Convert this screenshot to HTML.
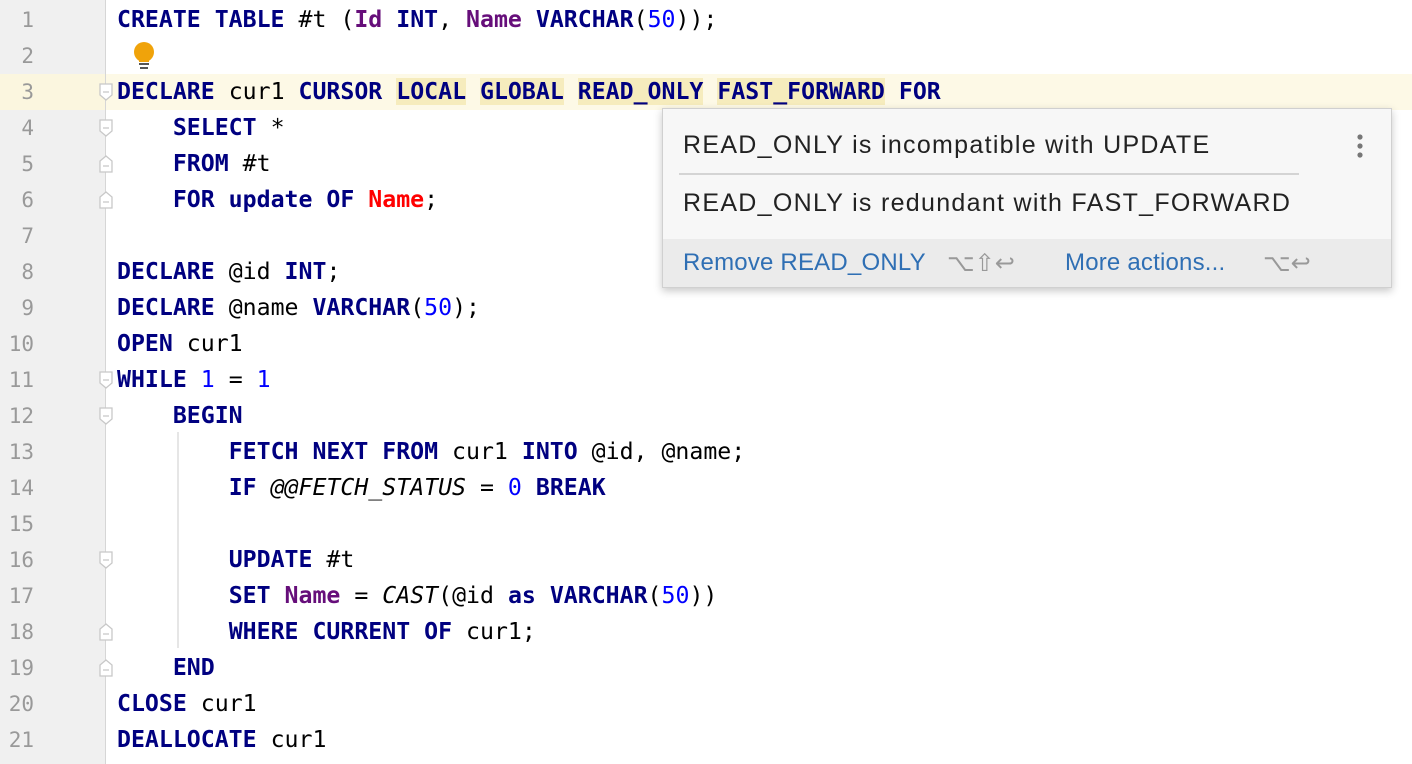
<!DOCTYPE html>
<html><head><meta charset="utf-8"><style>
body{margin:0;width:1412px;height:764px;overflow:hidden;background:#fff;position:relative;font-family:"DejaVu Sans Mono","Liberation Mono",monospace;}
.gut{position:absolute;left:0;top:0;width:106px;height:764px;background:#f0f0f0;}
.gl{position:absolute;left:105px;top:0;width:1px;height:764px;background:#d6d6d6;}
.hl{position:absolute;left:0;top:74px;width:1412px;height:36px;background:#fdf9e6;}
.hlg{position:absolute;left:0;top:74px;width:106px;height:36px;background:#fbf6df;}
.ln{position:absolute;left:0;width:34px;text-align:right;font-size:21px;color:#999;font-family:"DejaVu Sans Mono",monospace;}
.code{position:absolute;left:117px;top:2px;font-size:23.2px;line-height:36px;white-space:pre;color:#000;}
.k{color:#000080;font-weight:bold}
.n{color:#0000ff}
.p{color:#660e7a;font-weight:bold}
.r{color:#ff0000;font-weight:bold}
.i{font-style:italic}
.m{background:#f6ecbd}
.ig{position:absolute;left:177px;top:432px;width:2px;height:216px;background:#e6e6e6;}
.pop{position:absolute;left:662px;top:108px;width:728px;height:178px;background:#f7f7f7;border:1px solid #d0d0d0;box-shadow:0 3px 8px rgba(0,0,0,.22);font-family:"Liberation Sans",sans-serif;font-size:24px;color:#222;}
.pop .t{position:absolute;left:20px;font-size:25px;letter-spacing:1.3px;}
.foot{position:absolute;left:0;top:130px;width:728px;height:48px;background:#ebebeb;}
.a{position:absolute;top:10px;color:#2f6fb4;letter-spacing:0.2px}
.s{position:absolute;top:10px;color:#999;}
.fm{position:absolute;left:98px;}
</style></head><body>
<div class="gut"></div>
<div class="hlg"></div>
<div class="gl"></div>
<div class="hl" style="left:106px;width:1306px"></div>
<div class="ln" style="top:8px">1</div>
<div class="ln" style="top:44px">2</div>
<div class="ln" style="top:80px">3</div>
<div class="ln" style="top:116px">4</div>
<div class="ln" style="top:152px">5</div>
<div class="ln" style="top:188px">6</div>
<div class="ln" style="top:224px">7</div>
<div class="ln" style="top:260px">8</div>
<div class="ln" style="top:296px">9</div>
<div class="ln" style="top:332px">10</div>
<div class="ln" style="top:368px">11</div>
<div class="ln" style="top:404px">12</div>
<div class="ln" style="top:440px">13</div>
<div class="ln" style="top:476px">14</div>
<div class="ln" style="top:512px">15</div>
<div class="ln" style="top:548px">16</div>
<div class="ln" style="top:584px">17</div>
<div class="ln" style="top:620px">18</div>
<div class="ln" style="top:656px">19</div>
<div class="ln" style="top:692px">20</div>
<div class="ln" style="top:728px">21</div>
<svg class="fm" style="top:0" width="16" height="764" viewBox="0 0 16 764">
<g fill="#fff" stroke="#c8c8c8" stroke-width="1.3">
<path d="M2 84h12v11l-6 5l-6-5z"/><path d="M2 120h12v11l-6 5l-6-5z"/>
<path d="M2 372h12v11l-6 5l-6-5z"/><path d="M2 408h12v11l-6 5l-6-5z"/>
<path d="M2 552h12v11l-6 5l-6-5z"/>
<path d="M2 172h12v-11l-6-5l-6 5z"/><path d="M2 208h12v-11l-6-5l-6 5z"/>
<path d="M2 640h12v-11l-6-5l-6 5z"/><path d="M2 676h12v-11l-6-5l-6 5z"/>
</g>
<g stroke="#c8c8c8" stroke-width="1.3">
<path d="M5 92h6M5 128h6M5 380h6M5 416h6M5 560h6M5 166h6M5 202h6M5 634h6M5 670h6"/>
</g>
</svg>
<svg style="position:absolute;left:133px;top:42px" width="22" height="30" viewBox="0 0 22 30">
<circle cx="11" cy="10" r="10" fill="#f0a30a"/><rect x="6" y="14" width="10" height="6" fill="#f0a30a"/>
<rect x="6" y="21" width="10" height="2" fill="#555"/><rect x="7" y="25" width="8" height="2" fill="#555"/>
</svg>
<div class="ig"></div>
<div class="code"><span class="k">CREATE TABLE</span> #t (<span class="p">Id</span> <span class="k">INT</span>, <span class="p">Name</span> <span class="k">VARCHAR</span>(<span class="n">50</span>));

<span class="k">DECLARE</span> cur1 <span class="k">CURSOR</span> <span class="k m">LOCAL</span> <span class="k m">GLOBAL</span> <span class="k m">READ_ONLY</span> <span class="k m">FAST_FORWARD</span> <span class="k">FOR</span>
    <span class="k">SELECT</span> *
    <span class="k">FROM</span> #t
    <span class="k">FOR update OF</span> <span class="r">Name</span>;

<span class="k">DECLARE</span> @id <span class="k">INT</span>;
<span class="k">DECLARE</span> @name <span class="k">VARCHAR</span>(<span class="n">50</span>);
<span class="k">OPEN</span> cur1
<span class="k">WHILE</span> <span class="n">1</span> = <span class="n">1</span>
    <span class="k">BEGIN</span>
        <span class="k">FETCH NEXT FROM</span> cur1 <span class="k">INTO</span> @id, @name;
        <span class="k">IF</span> <span class="i">@@FETCH_STATUS</span> = <span class="n">0</span> <span class="k">BREAK</span>

        <span class="k">UPDATE</span> #t
        <span class="k">SET</span> <span class="p">Name</span> = <span class="i">CAST</span>(@id <span class="k">as VARCHAR</span>(<span class="n">50</span>))
        <span class="k">WHERE CURRENT OF</span> cur1;
    <span class="k">END</span>
<span class="k">CLOSE</span> cur1
<span class="k">DEALLOCATE</span> cur1</div>
<div class="pop">
<div class="t" style="top:22px">READ_ONLY is incompatible with UPDATE</div>
<div style="position:absolute;left:16px;top:64px;width:620px;height:2px;background:#d4d4d4"></div>
<div class="t" style="top:80px">READ_ONLY is redundant with FAST_FORWARD</div>
<svg style="position:absolute;left:693px;top:24px" width="8" height="30"><circle cx="4" cy="4" r="2.6" fill="#777"/><circle cx="4" cy="13" r="2.6" fill="#777"/><circle cx="4" cy="22" r="2.6" fill="#777"/></svg>
<div class="foot">
<span class="a" style="left:20px">Remove READ_ONLY</span>
<span class="s" style="left:284px">⌥⇧↩</span>
<span class="a" style="left:402px">More actions...</span>
<span class="s" style="left:600px">⌥↩</span>
</div>
</div>
</body></html>
